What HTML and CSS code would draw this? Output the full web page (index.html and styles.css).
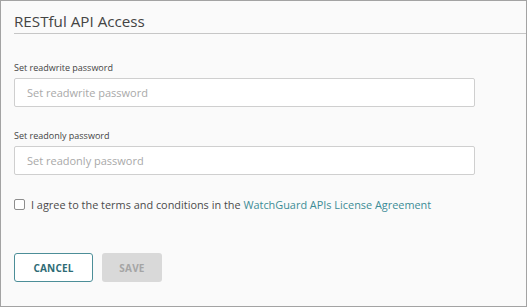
FILE: index.html
```html
<!DOCTYPE html>
<html>
<head>
<meta charset="utf-8">
<link rel="stylesheet" href="styles.css">
</head>
<body>
<div class="panel">
  <h1 class="title">RESTful API Access</h1>
  <div class="field">
    <label class="label">Set readwrite password</label>
    <input class="input" type="password" placeholder="Set readwrite password">
  </div>
  <div class="field">
    <label class="label">Set readonly password</label>
    <input class="input" type="password" placeholder="Set readonly password">
  </div>
  <label class="agree">
    <span class="box"></span>
    <span>I agree to the terms and conditions in the <a class="link" href="#">WatchGuard APIs License Agreement</a></span>
  </label>
  <div class="actions">
    <button class="btn btn-cancel">CANCEL</button>
    <button class="btn btn-save">SAVE</button>
  </div>
</div>
</body>
</html>
```
FILE: styles.css
```css
* { box-sizing: border-box; }
html, body { margin: 0; padding: 0; }
body {
  width: 527px;
  height: 308px;
  font-family: "Open Sans", "Noto Sans", sans-serif;
  background: #fff;
}
.panel {
  width: 527px;
  height: 307px;
  border: 1px solid #a3a3a3;
  background: #fafafa;
  padding: 0 0 0 13px;
  display: flex;
  flex-direction: column;
}
.title {
  margin: 9px 0 0 0;
  font-size: 15.2px;
  font-weight: 400;
  color: #444;
  line-height: 22px;
  padding-bottom: 1px;
  border-bottom: 1px solid #c6c6c6;
}
.field {
  display: flex;
  flex-direction: column;
  width: 461px;
}
.field:first-of-type { margin-top: 28px; }
.field + .field { margin-top: 23px; }
.label {
  font-size: 9px;
  line-height: 12px;
  color: #444;
  margin-bottom: 4px;
}
.input {
  height: 29px;
  border: 1px solid #cfcfcf;
  border-radius: 2px;
  background: #fff;
  padding: 0 12px;
  font-family: inherit;
  font-size: 11px;
  outline: none;
}
.input::placeholder { color: #a9a9a9; }
.agree {
  margin-top: 22px;
  display: flex;
  align-items: center;
  gap: 6px;
  font-size: 10.9px;
  line-height: 15px;
  color: #4a4a4a;
}
.box {
  width: 11px;
  height: 11px;
  border: 1px solid #8d8d8d;
  border-radius: 2px;
  background: #fff;
  flex: none;
}
.link { color: #3c8c96; text-decoration: none; }
.actions {
  margin-top: 41px;
  display: flex;
  gap: 9px;
}
.btn {
  height: 29px;
  border-radius: 3px;
  font-family: inherit;
  font-size: 10px;
  font-weight: 700;
  padding: 0;
  letter-spacing: 0.2px;
}
.btn-cancel {
  width: 79px;
  border: 1px solid #4c8e98;
  background: #fff;
  color: #2e6b75;
}
.btn-save {
  width: 60px;
  border: none;
  background: #d9d9d9;
  color: #a5a5a5;
}
```
